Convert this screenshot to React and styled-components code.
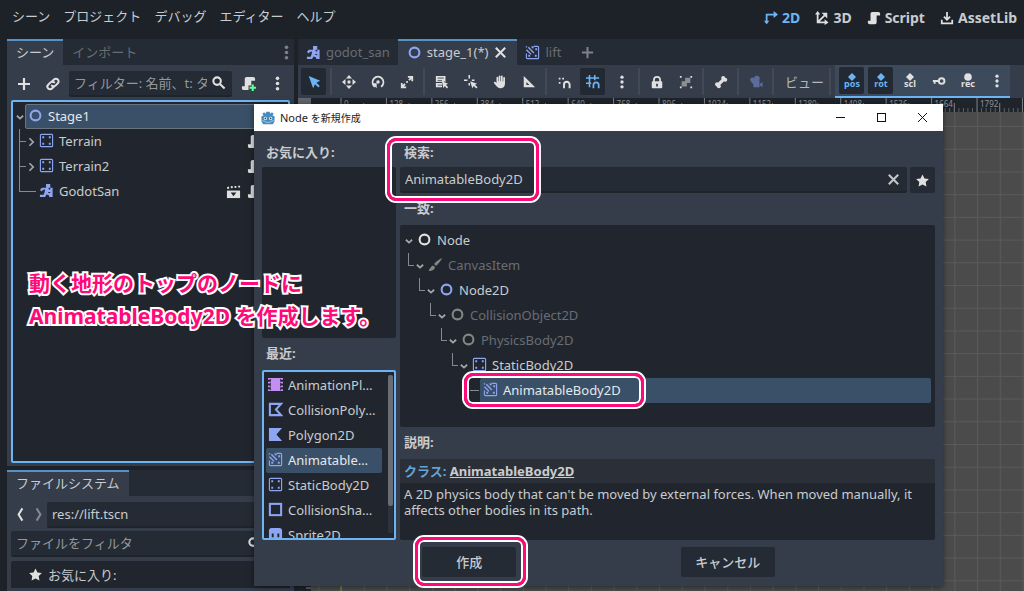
import styled, { createGlobalStyle, css } from 'styled-components';

const colors = {
    page: '#1d2229',
    base: '#363d4a',
    tabBar: '#252b34',
    field: '#252b34',
    tree: '#21262e',
    selected: '#3a5068',
    accent: '#6cb4f4',
    text: '#c9cccf',
    dim: '#686c73',
    icon: '#e0e0e0',
    node2d: '#8da5f3',
    line: '#858a90',
    pink: '#ff0a78',
};

const STEP = 45.43;

const icons = {
    node: <circle cx="8" cy="8" r="5.2" fill="none" stroke="currentColor" strokeWidth="2.2" />,
    plus: <path d="M8 2v12M2 8h12" stroke="currentColor" strokeWidth="2.2" />,
    link: <g fill="none" stroke="currentColor" strokeWidth="2" strokeLinecap="round"><path d="M7 5.5l2-2a2.6 2.6 0 0 1 3.8 3.8L10.5 9.6a2.6 2.6 0 0 1-3.7 0" /><path d="M9 10.5l-2 2a2.6 2.6 0 0 1-3.8-3.8L5.5 6.4a2.6 2.6 0 0 1 3.7 0" /></g>,
    search: <g fill="none" stroke="currentColor" strokeWidth="2.2"><circle cx="6.5" cy="6.5" r="4" /><path d="M9.5 9.5l5 5" /></g>,
    script: <path d="M6 1a2 2 0 0 0-2 2v8H1v2a2 2 0 0 0 2 2h6a2 2 0 0 0 2-2V5h4V3a2 2 0 0 0-2-2z" fill="currentColor" />,
    scriptAdd: <g><path d="M6 1a2 2 0 0 0-2 2v8H1v2a2 2 0 0 0 2 2h5v-5h3V5h4V3a2 2 0 0 0-2-2z" fill="currentColor" /><path d="M12.5 9v7M9 12.5h7" stroke="#5fff97" strokeWidth="2.2" /></g>,
    dots: <g fill="currentColor"><circle cx="8" cy="2.5" r="1.9" /><circle cx="8" cy="8" r="1.9" /><circle cx="8" cy="13.5" r="1.9" /></g>,
    body: <g><rect x="1.5" y="1.5" width="13" height="13" rx="1" fill="none" stroke="currentColor" strokeWidth="1.2" /><path d="M3.500 3.500h2v2h-2zM10.500 3.500h2v2h-2zM3.500 10.500h2v2h-2zM10.500 10.500h2v2h-2z" fill="currentColor" /></g>,
    animBody: <g fill="none" stroke="currentColor" strokeWidth="1.2"><path d="M9 1.500h4.500a1 1 0 0 1 1 1v11a1 1 0 0 1-1 1h-11a1 1 0 0 1-1-1V9" /><path d="M1.500 5l5 5M3.500 2.500l6 6M7 1.500l2 2M1 1.500l1 1" strokeWidth="1.500" /><path d="M11 3.500h2v2h-2zM3.500 10.500h2v2h-2zM10.500 10.500h2v2h-2z" fill="currentColor" stroke="none" /></g>,
    runner: <g fill="currentColor"><path d="M7.500 1h4.500v4H10.500l-.5 1.500 2 .8V5h2.500v4.500H10l-.5 1 2.500.5v-1.500h2.500V15H11l-.5-2-2.500-.8L6.500 15H1v-2.500h4l1-3L6.500 7 4 7.500 3 9 1 7.500 3 5h4.500z" /></g>,
    clapper: <g fill="currentColor"><path d="M1 7h14v8H1z" /><path d="M5 9h6l-3 4z" fill="#21262e" /><path d="M1 3.500l2-.8.6 2-2 .8zM5 2.500l2-.3.3 2-2 .3zM9 2.200l2-.2.200 2-2 .2zM13 1.800h2v2h-2z" /></g>,
    star: <path d="M8 1.500l2.100 4.300 4.700.6-3.400 3.300.8 4.700L8 12.200l-4.200 2.200.8-4.700L1.200 6.400l4.700-.6z" fill="currentColor" />,
    close: <path d="M3 3l10 10M13 3L3 13" stroke="currentColor" strokeWidth="2.2" />,
    brush: <path d="M15 1c-3.500 1.500-6.500 4-8.500 6.500l2 2c2.500-2.300 5.300-5.300 6.500-8.500zM5.500 9c-2 .2-2 2-4.500 4.500v1.500c3 .3 6-1 6.500-4z" fill="currentColor" />,
    film: <path d="M3 1h10v14H3zM0 1h2v2H0zM0 5h2v2H0zM0 9h2v2H0zM0 13h2v2H0zM14 1h2v2h-2zM14 5h2v2h-2zM14 9h2v2h-2zM14 13h2v2h-2zM2 1h12v1H2zM2 5h12v1H2zM2 10h12v1H2zM2 14h12v1H2z" fill="currentColor" />,
    collPoly: <path d="M14 2H2v12h12L8.500 8z" fill="none" stroke="currentColor" strokeWidth="2.2" />,
    polygon: <path d="M15 1H1v14h14L9 8z" fill="currentColor" />,
    shape: <rect x="2" y="2" width="12" height="12" fill="none" stroke="currentColor" strokeWidth="2.2" />,
    sprite: <g><path d="M4 1a3 3 0 0 0-3 3v11h14V4a3 3 0 0 0-3-3z" fill="currentColor" /><path d="M4 7h2v4H4zM10 7h2v4h-2z" fill="#21262e" /></g>,
    select: <path d="M2 1l5 14 2.200-4.500L13 14.300l1.600-1.600-3.800-3.800L15 6.500z" fill="currentColor" />,
    move: <g fill="currentColor"><circle cx="8" cy="8" r="1.900" /><path d="M8 0l3.500 4h-7zM8 16l3.500-4h-7zM0 8l4-3.500v7zM16 8l-4-3.500v7z" /></g>,
    rotate: <g fill="none" stroke="currentColor" strokeWidth="2"><path d="M4.500 13.500A6.300 6.300 0 1 1 11.500 13.500" /><circle cx="8" cy="8" r="2" fill="currentColor" stroke="none" /><path d="M1 9.500h5.500V15z" fill="currentColor" stroke="none" /></g>,
    scale: <g fill="currentColor"><path d="M9 1h6v6h-2V4.500L11 6.500 9.500 5l2-2H9zM7 15H1V9h2v2.500L5 9.500 6.500 11l-2 2H7z" /><circle cx="8" cy="8" r="1.200" /></g>,
    list: <g><path d="M1 1h11v7l-2-1v1H1zM1 9h7v2H3v1h5v2H1z" fill="currentColor" /><path d="M3 3.500h7M3 6.500h5" stroke="#363d4a" /><path d="M8 7l7 3-2.500 1.200L15 14l-1.500 1.300-2.300-2.600L9.500 15z" fill="currentColor" /></g>,
    pivot: <g><path d="M0 6h4M6 0v4M9 6h3M6 9v3" stroke="currentColor" strokeWidth="1.800" /><path d="M7 7l8 3-2.500 1.200L15.500 14 14 15.500l-2.800-3L9.500 15z" fill="currentColor" /></g>,
    hand: <path d="M6.500 1.500a1 1 0 0 1 2 0V7h.6V1.700a1 1 0 0 1 2 0V7.500h.6V3.300a1 1 0 0 1 2 0V10c0 3-2 5-4.500 5C6 15 4.500 13.500 1.200 9.300c-.7-1 .8-2 1.700-1.200L4 9.200V3a1 1 0 0 1 2 0V7h.5z" fill="currentColor" />,
    ruler: <path d="M2 1v13h13zM5 8l3.500 3.500H5z" fill="currentColor" fillRule="evenodd" />,
    snap: <g><path d="M2 3h2v2H2zM6 3h2v2H6zM2 8h2v2H2z" fill="currentColor" /><path d="M8 15v-4a3.200 3.200 0 0 1 6.400 0v4" fill="none" stroke="currentColor" strokeWidth="2.200" /></g>,
    gridSnap: <g fill="none" stroke="currentColor"><path d="M4 0v14M10 0v6M0 3.500h15M0 9.500h6" strokeWidth="1.800" /><path d="M8.500 15v-3.500a3 3 0 0 1 6 0V15" strokeWidth="2" /></g>,
    lock: <g><rect x="2" y="7" width="12" height="8" rx="1" fill="currentColor" /><path d="M4.500 8V5.500a3.500 3.500 0 0 1 7 0V8" fill="none" stroke="currentColor" strokeWidth="2" /><path d="M7 10h2v3H7z" fill="#363d4a" /></g>,
    group: <g fill="currentColor"><path d="M7 3h6v6H7zM3 7h6v6H3z" opacity=".5" /><path d="M1 1h2v2H1zM13 1h2v2h-2zM1 13h2v2H1zM13 13h2v2h-2z" /></g>,
    bone: <g fill="currentColor"><path d="M4 9.500L9.500 4l2.500 2.500L6.500 12z" /><circle cx="10.500" cy="3.500" r="2.300" /><circle cx="12.800" cy="5.500" r="2.300" /><circle cx="3.500" cy="10.500" r="2.300" /><circle cx="5.500" cy="12.800" r="2.300" /></g>,
    camera: <g fill="currentColor"><circle cx="9" cy="4" r="3.200" /><circle cx="4" cy="5.500" r="2.600" /><path d="M3 6h9v8H5v-4L3 9zM12.500 10l3-2v6l-3-2z" /></g>,
    key: <g fill="none" stroke="currentColor" strokeWidth="2.200"><circle cx="11" cy="8" r="3.200" /><path d="M8 8H1M3 8v3" /></g>,
    back: <path d="M10 1.500L6 8l4 6.500" fill="none" stroke="currentColor" strokeWidth="2.200" />,
    forward: <path d="M6 1.500L10 8l-4 6.500" fill="none" stroke="currentColor" strokeWidth="2.200" />,
    down: <path d="M3 6l5 4.500L13 6" fill="none" stroke="currentColor" strokeWidth="2.800" />,
    right: <path d="M5.500 2L11.500 8l-6 6" fill="none" stroke="currentColor" strokeWidth="2.800" />,
    ws2d: <g><path d="M3 14V4h9" fill="none" stroke="currentColor" strokeWidth="2" /><path d="M11 0l5 4-5 4zM0 11h6l-3 4z" fill="currentColor" /></g>,
    ws3d: <g><path d="M3 3v10h9M3 13l8-8" fill="none" stroke="currentColor" strokeWidth="2" /><path d="M0 4l3-4 3 4zM11 9.500l4.500 3.500-4.500 3zM7.500 2H14v6.500z" fill="currentColor" /></g>,
    assetLib: <path d="M8 1v8M4.500 6.500L8 10l3.500-3.500M2 10v4h12v-4" fill="none" stroke="currentColor" strokeWidth="2" />,
    godot: <g><path d="M3 5L1.500 3 3.500 1.500 5.300 3 6 .8h4l.7 2.200 1.800-1.500L14.500 3 13 5l2.500 1v6l-2 3h-11l-2-3V6z" fill="#478cbf" /><circle cx="5" cy="8.500" r="1.800" fill="#fff" /><circle cx="11" cy="8.500" r="1.800" fill="#fff" /><circle cx="5" cy="8.500" r="1" fill="#414042" /><circle cx="11" cy="8.500" r="1" fill="#414042" /><path d="M1 11l4 .8.5 1.200h5l.5-1.200 4-.8" fill="none" stroke="#cfe3f2" strokeWidth=".7" /></g>,
};

function Icon({ name, size = 15, color = colors.icon }) {
    return (
        <IconSvg viewBox="0 0 16 16" width={size} height={size} $color={color} aria-hidden="true">
            {icons[name]}
        </IconSvg>
    );
}

function KeyIcon({ label, round, color = colors.icon }) {
    return (
        <IconSvg viewBox="0 0 16 16" width="16" height="16" $color={color} aria-hidden="true">
            {round ? <circle cx="8" cy="4" r="3.800" fill="currentColor" /> : <path d="M8 0l4 4-4 4-4-4z" fill="currentColor" />}
            <text x="8" y="14" textAnchor="middle" fontSize="9" fontWeight="700" fontFamily="Noto Sans" fill="currentColor">{label}</text>
        </IconSvg>
    );
}

function Tool({ name, active, color, label }) {
    return (
        <ToolButton $active={active} aria-label={label || name}>
            <Icon name={name} size={14} color={active ? colors.accent : color} />
        </ToolButton>
    );
}

const menus = ['シーン', 'プロジェクト', 'デバッグ', 'エディター', 'ヘルプ'];

const workspaces = [
    { name: '2D', icon: 'ws2d', active: true },
    { name: '3D', icon: 'ws3d' },
    { name: 'Script', icon: 'script' },
    { name: 'AssetLib', icon: 'assetLib' },
];

const matches = [
    { name: 'Node', icon: 'node', color: colors.icon },
    { name: 'CanvasItem', icon: 'brush', disabled: true },
    { name: 'Node2D', icon: 'node', color: colors.node2d },
    { name: 'CollisionObject2D', icon: 'node', disabled: true },
    { name: 'PhysicsBody2D', icon: 'node', disabled: true },
    { name: 'StaticBody2D', icon: 'body', color: colors.node2d },
    { name: 'AnimatableBody2D', icon: 'animBody', color: colors.node2d, selected: true },
];

const recent = [
    { name: 'AnimationPlayer', icon: 'film', color: '#c38ef1' },
    { name: 'CollisionPolygon2D', icon: 'collPoly' },
    { name: 'Polygon2D', icon: 'polygon' },
    { name: 'AnimatableBody2D', icon: 'animBody', selected: true },
    { name: 'StaticBody2D', icon: 'body' },
    { name: 'CollisionShape2D', icon: 'shape' },
    { name: 'Sprite2D', icon: 'sprite' },
];

function SceneDock() {
    return (
        <Panel $grow>
            <TabBar>
                <Tab $active>シーン</Tab>
                <Tab>インポート</Tab>
                <TabMenu aria-label="dock menu"><Icon name="dots" color="#7d8188" /></TabMenu>
            </TabBar>
            <DockBody>
                <DockRow>
                    <FlatButton aria-label="add"><Icon name="plus" size={16} /></FlatButton>
                    <FlatButton aria-label="instance"><Icon name="link" size={16} /></FlatButton>
                    <Field>
                        <FieldInput aria-label="filter nodes" placeholder="フィルター: 名前、t: タ" />
                        <Icon name="search" />
                    </Field>
                    <FlatButton aria-label="attach script"><Icon name="scriptAdd" /></FlatButton>
                    <FlatButton aria-label="more"><Icon name="dots" /></FlatButton>
                </DockRow>
                <SceneTree>
                    <SceneRow>
                        <Arrow><Icon name="down" size={10} color="#a3a6aa" /></Arrow>
                        <NodeLabel $selected $outlined><Icon name="node" color={colors.node2d} />Stage1</NodeLabel>
                    </SceneRow>
                    {['Terrain', 'Terrain2'].map((name) => (
                        <SceneRow key={name}>
                            <Branch />
                            <Arrow><Icon name="right" size={10} color="#a3a6aa" /></Arrow>
                            <NodeLabel><Icon name="body" color={colors.node2d} />{name}</NodeLabel>
                            <RowIcons><Icon name="script" /></RowIcons>
                        </SceneRow>
                    ))}
                    <SceneRow>
                        <Branch $last />
                        <NodeLabel><Icon name="runner" color={colors.node2d} />GodotSan</NodeLabel>
                        <RowIcons><Icon name="clapper" /><Icon name="script" /></RowIcons>
                    </SceneRow>
                </SceneTree>
            </DockBody>
        </Panel>
    );
}

function FileSystemDock() {
    return (
        <Panel>
            <TabBar>
                <Tab $active>ファイルシステム</Tab>
            </TabBar>
            <DockBody>
                <DockRow $tight>
                    <NavButton aria-label="back"><Icon name="back" /></NavButton>
                    <NavButton aria-label="forward"><Icon name="forward" color="#858990" /></NavButton>
                    <Field><FieldInput aria-label="path" defaultValue="res://lift.tscn" /></Field>
                </DockRow>
                <FilterRow>
                    <Field>
                        <FieldInput aria-label="filter files" placeholder="ファイルをフィルタ" />
                        <SearchSlot><Icon name="search" /></SearchSlot>
                    </Field>
                </FilterRow>
                <FileTree><Icon name="star" />お気に入り:</FileTree>
            </DockBody>
        </Panel>
    );
}

function Ruler() {
    const count = Math.floor((window.innerWidth - 341) / STEP);
    const marks = Array.from({ length: count + 1 }, (_, i) => i);
    return (
        <RulerSvg aria-hidden="true">
            {marks.map((i) => {
                const x = 43 + i * STEP;
                return (
                    <g key={i}>
                        <path d={`M${x} 0v14`} stroke="#7f8388" />
                        <path d={`M${x + STEP / 2} 5v9`} stroke="#7f8388" />
                        {[1, 2, 3, 4, 6, 7, 8, 9].map((n) => (
                            <path key={n} d={`M${x + (n * STEP) / 10} 10v4`} stroke="#5d6268" />
                        ))}
                        {i < count && <text x={x + 3} y="9" fontSize="8" fill="#8f9398">{i * 128}</text>}
                    </g>
                );
            })}
            <rect width="13" height="14" fill="#62656a" />
        </RulerSvg>
    );
}

function Viewport() {
    return (
        <Canvas>
            <Ruler />
            <CanvasSvg aria-hidden="true">
                <defs>
                    <pattern id="grid" x="43" y="14" width={STEP / 2} height={STEP / 2} patternUnits="userSpaceOnUse">
                        <path d={`M.5 0V${STEP}M0 .5H${STEP}`} stroke="#5a5a5a" fill="none" />
                    </pattern>
                </defs>
                <rect width="100%" height="100%" fill="#4b4b4b" />
                <rect width="100%" height="100%" fill="url(#grid)" />
                <path d="M43 0v2000" stroke="#7f9e35" />
                <rect width="13" height="100%" fill="#1f242b" />
                <path d="M8 476h5" stroke="#8f9398" />
            </CanvasSvg>
        </Canvas>
    );
}

function MainPanel() {
    return (
        <Main>
            <TabBar>
                <SceneTab><Icon name="runner" color={colors.node2d} />godot_san</SceneTab>
                <SceneTab $active><Icon name="node" color={colors.node2d} />stage_1(*)<Icon name="close" /></SceneTab>
                <SceneTab><Icon name="animBody" color={colors.node2d} />lift</SceneTab>
                <AddTab aria-label="new scene"><Icon name="plus" color="#7d8188" /></AddTab>
            </TabBar>
            <Toolbar>
                <Tool name="select" active />
                <Divider />
                <Tool name="move" />
                <Tool name="rotate" />
                <Tool name="scale" />
                <Divider />
                <Tool name="list" />
                <Tool name="pivot" />
                <Tool name="hand" />
                <Tool name="ruler" />
                <Divider />
                <Tool name="snap" />
                <Tool name="gridSnap" active />
                <Tool name="dots" />
                <Divider />
                <Tool name="lock" />
                <Tool name="group" />
                <Divider />
                <Tool name="bone" />
                <Divider />
                <Tool name="camera" color="#5c6c9c" />
                <Divider />
                <ViewButton>ビュー</ViewButton>
                <Divider />
                <KeyTools>
                    <ToolButton $active aria-label="key position"><KeyIcon label="pos" color={colors.accent} /></ToolButton>
                    <ToolButton $active aria-label="key rotation"><KeyIcon label="rot" color={colors.accent} /></ToolButton>
                    <ToolButton aria-label="key scale"><KeyIcon label="scl" /></ToolButton>
                    <Tool name="key" />
                    <ToolButton aria-label="auto key"><KeyIcon label="rec" round /></ToolButton>
                    <Tool name="dots" />
                </KeyTools>
            </Toolbar>
            <Viewport />
        </Main>
    );
}

function CreateDialog() {
    return (
        <Dialog role="dialog" aria-labelledby="dialog-title">
            <TitleBar>
                <Icon name="godot" size={14} />
                <DialogTitle id="dialog-title">Node <TitleKana>を新規作成</TitleKana></DialogTitle>
                <WindowButton aria-label="minimize"><svg width="11" height="11"><path d="M1 5.500h9" stroke="#111" /></svg></WindowButton>
                <WindowButton aria-label="maximize"><svg width="11" height="11"><rect x="1.500" y="1.500" width="8" height="8" fill="none" stroke="#111" /></svg></WindowButton>
                <WindowButton aria-label="close"><svg width="11" height="11"><path d="M1 1l9 9M10 1l-9 9" stroke="#111" /></svg></WindowButton>
            </TitleBar>
            <DialogBody>
                <Columns>
                    <LeftColumn>
                        <Label>お気に入り:</Label>
                        <Favorites />
                        <Label $tall>最近:</Label>
                        <RecentBox>
                            <RecentList>
                                {recent.map((item) => (
                                    <RecentItem key={item.name} $selected={item.selected}>
                                        <Icon name={item.icon} color={item.color || colors.node2d} />
                                        <RecentName>{item.name}</RecentName>
                                    </RecentItem>
                                ))}
                            </RecentList>
                            <ScrollTrack><ScrollThumb /></ScrollTrack>
                        </RecentBox>
                    </LeftColumn>
                    <RightColumn>
                        <Label as="label" htmlFor="search">検索:</Label>
                        <SearchRow>
                            <Field>
                                <FieldInput id="search" defaultValue="AnimatableBody2D" />
                                <ClearButton aria-label="clear"><Icon name="close" color="#c3c6ca" /></ClearButton>
                            </Field>
                            <StarButton aria-label="favorite"><Icon name="star" /></StarButton>
                        </SearchRow>
                        <Label $tall>一致:</Label>
                        <MatchTree>
                            {matches.map((item, level) => (
                                <MatchRow key={item.name} $level={level}>
                                    {level > 0 && <Elbow />}
                                    <MatchArrow>
                                        {item.selected ? <Dash /> : <Icon name="down" size={10} color="#a3a6aa" />}
                                    </MatchArrow>
                                    <NodeLabel $selected={item.selected} $disabled={item.disabled}>
                                        <Icon name={item.icon} color={item.disabled ? '#84867f' : item.color} />
                                        {item.name}
                                    </NodeLabel>
                                </MatchRow>
                            ))}
                        </MatchTree>
                        <Label $tall>説明:</Label>
                        <Help>
                            <HelpTitle>クラス: <HelpLink href="#AnimatableBody2D">AnimatableBody2D</HelpLink></HelpTitle>
                            <HelpText>A 2D physics body that can't be moved by external forces. When moved manually, it affects other bodies in its path.</HelpText>
                        </Help>
                    </RightColumn>
                </Columns>
                <Actions>
                    <ActionButton>作成</ActionButton>
                    <ActionButton>キャンセル</ActionButton>
                </Actions>
            </DialogBody>
        </Dialog>
    );
}

export default function App() {
    return (
        <Editor>
            <GlobalStyle />
            <MenuBar>
                {menus.map((menu) => <MenuButton key={menu}>{menu}</MenuButton>)}
                <Workspaces>
                    {workspaces.map(({ name, icon, active }) => (
                        <WorkspaceButton key={name} $active={active}>
                            <Icon name={icon} size={14} color={active ? colors.accent : colors.icon} />
                            {name}
                        </WorkspaceButton>
                    ))}
                </Workspaces>
            </MenuBar>
            <Workspace>
                <Docks>
                    <SceneDock />
                    <FileSystemDock />
                </Docks>
                <MainPanel />
            </Workspace>
            <CreateDialog />
            <Highlight $x={385} $y={136} $w={156} $h={67} />
            <Highlight $x={462} $y={371} $w={184} $h={38} />
            <Highlight $x={413} $y={535} $w={115} $h={53} />
            <Caption>動く地形のトップのノードに<br />AnimatableBody2D を作成します。</Caption>
        </Editor>
    );
}

const GlobalStyle = createGlobalStyle`
    * {
        box-sizing: border-box;
    }

    body {
        margin: 0;
        background: ${colors.page};
        color: ${colors.text};
        font: 13px/18px 'Noto Sans', 'Noto Sans CJK JP', sans-serif;
    }

    button, input {
        padding: 0;
        border: 0;
        background: none;
        color: inherit;
        font: inherit;
    }
`;

const Editor = styled.div`
    position: relative;
    display: flex;
    flex-direction: column;
    height: 100vh;
    overflow: hidden;
    white-space: nowrap;
`;

const IconSvg = styled.svg`
    display: block;
    flex: none;
    color: ${({ $color }) => $color};
`;

const MenuBar = styled.header`
    display: flex;
    align-items: center;
    gap: 13px;
    height: 39px;
    padding: 0 7px 8px 12px;
`;

const MenuButton = styled.button`
    height: 24px;
`;

const Workspaces = styled.nav`
    display: flex;
    gap: 15px;
    margin-left: auto;
    padding-top: 4px;
`;

const WorkspaceButton = styled.button`
    display: flex;
    align-items: center;
    gap: 4px;
    color: ${({ $active }) => ($active ? colors.accent : colors.text)};
    font-size: 14px;
    font-weight: 700;
`;

const Workspace = styled.div`
    display: flex;
    flex: 1;
    gap: 4px;
    min-height: 0;
    padding-left: 7px;
`;

const Docks = styled.aside`
    display: flex;
    flex-direction: column;
    gap: 4px;
    width: 287px;
`;

const Panel = styled.section`
    display: flex;
    flex: ${({ $grow }) => ($grow ? '1' : '0 0 121px')};
    flex-direction: column;
    min-height: 0;
    background: ${colors.base};
`;

const TabBar = styled.div`
    display: flex;
    flex: none;
    height: 26px;
    background: ${colors.tabBar};
`;

const Tab = styled.button`
    padding: 0 9px 2px;
    border-top: 2px solid transparent;
    color: ${colors.dim};

    ${({ $active }) => $active && css`
        border-color: #5592c7;
        background: ${colors.base};
        color: ${colors.text};
    `}
`;

const TabMenu = styled.button`
    margin-left: auto;
`;

const DockBody = styled.div`
    display: flex;
    flex: 1;
    flex-direction: column;
    min-height: 0;
    padding: 6px 4px 3px;
`;

const DockRow = styled.div`
    display: flex;
    align-items: center;
    gap: ${({ $tight }) => ($tight ? '0' : '4px')};
    height: 25px;
    margin-bottom: 4px;
`;

const FlatButton = styled.button`
    display: grid;
    place-items: center;
    width: 25px;
    height: 25px;
`;

const NavButton = styled(FlatButton)`
    width: 18px;
`;

const Field = styled.div`
    display: flex;
    flex: 1;
    align-items: center;
    gap: 4px;
    min-width: 0;
    height: 26px;
    padding: 0 6px 0 5px;
    border-bottom: 2px solid #1f242b;
    border-radius: 2px;
    background: ${colors.field};
`;

const FieldInput = styled.input`
    flex: 1;
    min-width: 0;
    height: 24px;
    outline: none;

    &::placeholder {
        color: #94989d;
        opacity: 1;
    }
`;

const FilterRow = styled.div`
    display: flex;
    margin-bottom: 4px;
`;

const SearchSlot = styled.span`
    margin-right: 22px;
`;

const SceneTree = styled.div`
    flex: 1;
    padding: 2px 0;
    border: 2px solid ${colors.accent};
    border-radius: 2px;
    background: ${colors.tree};
`;

const SceneRow = styled.div`
    display: flex;
    align-items: center;
    height: 25px;
    padding-left: 2px;
`;

const Arrow = styled.span`
    display: grid;
    place-items: center;
    width: 10px;
    height: 25px;
`;

const Branch = styled.span`
    width: ${({ $last }) => ($last ? '17px' : '7px')};
    height: 25px;
    margin-left: 4px;
    background:
        linear-gradient(${colors.line}, ${colors.line}) 0 0 / 1px ${({ $last }) => ($last ? '50%' : '100%')} no-repeat,
        linear-gradient(${colors.line}, ${colors.line}) 0 50% / 100% 1px no-repeat;
`;

const NodeLabel = styled.span`
    display: flex;
    flex: 1;
    align-items: center;
    gap: 5px;
    height: 25px;
    padding: 0 0 2px 3px;
    border-radius: 2px;
    color: ${({ $disabled }) => ($disabled ? colors.dim : colors.text)};

    ${({ $selected }) => $selected && css`
        background: ${colors.selected};
        color: #e4e8eb;
    `}

    ${({ $outlined }) => $outlined && css`
        padding-left: 2px;
        border: 1px solid #69747f;
    `}
`;

const RowIcons = styled.span`
    display: flex;
    gap: 6px;
    padding-right: 26px;
`;

const FileTree = styled.div`
    display: flex;
    flex: 1;
    align-items: center;
    gap: 5px;
    padding: 0 17px;
    border-radius: 2px 2px 0 0;
    background: ${colors.tree};
`;

const Main = styled.main`
    display: flex;
    flex: 1;
    flex-direction: column;
    min-width: 0;
    background: ${colors.base};
`;

const SceneTab = styled(Tab)`
    display: flex;
    align-items: center;
    gap: 5px;
    padding: 0 ${({ $active }) => ($active ? '9px' : '8px')} 2px;
`;

const AddTab = styled.button`
    padding: 0 11px;
`;

const Toolbar = styled.div`
    display: flex;
    align-items: center;
    gap: 4px;
    height: 33px;
    padding-left: 3px;
`;

const ToolButton = styled.button`
    display: grid;
    flex: none;
    place-items: center;
    width: 25px;
    height: 27px;
    border-radius: 2px;
    background: ${({ $active }) => ($active ? '#222932' : 'transparent')};
`;

const Divider = styled.span`
    width: 2px;
    height: 27px;
    background: #434a56;
`;

const ViewButton = styled.button`
    width: 47px;
    padding-left: 6px;
    color: #b3b6bb;
`;

const KeyTools = styled.div`
    display: flex;
    align-items: center;
    gap: 4px;
    height: 33px;
    padding: 0 1px 0 4px;
    border-bottom: 2px solid ${colors.accent};
    background: #3c4a5b;
`;

const Canvas = styled.div`
    display: flex;
    flex: 1;
    flex-direction: column;
    min-height: 0;
`;

const RulerSvg = styled.svg`
    display: block;
    width: 100%;
    height: 14px;
    background: #1f242b;
`;

const CanvasSvg = styled.svg`
    display: block;
    flex: 1;
    width: 100%;
    min-height: 0;
`;

const Dialog = styled.div`
    position: absolute;
    top: 104px;
    right: 81px;
    left: 254px;
    background: ${colors.base};
    box-shadow: 0 1px 6px rgba(0, 0, 0, 0.5);
`;

const TitleBar = styled.div`
    display: flex;
    align-items: center;
    height: 27px;
    padding-left: 7px;
    background: #fff;
`;

const DialogTitle = styled.span`
    flex: 1;
    margin-left: 5px;
    color: #222;
    font-size: 11px;
`;

const TitleKana = styled.span`
    font-size: 10px;
`;

const WindowButton = styled.button`
    display: grid;
    place-items: center;
    width: 41px;
    height: 27px;
`;

const DialogBody = styled.div`
    padding: 6px 8px 9px;
`;

const Columns = styled.div`
    display: flex;
    gap: 4px;
`;

const LeftColumn = styled.div`
    display: flex;
    flex-direction: column;
    width: 134px;
`;

const RightColumn = styled.div`
    flex: 1;
    min-width: 0;
`;

const Label = styled.div`
    display: block;
    height: ${({ $tall }) => ($tall ? '32px' : '30px')};
    padding-left: 4px;
    font-weight: 700;
    line-height: 30px;
`;

const Favorites = styled.div`
    height: 171px;
    border-radius: 2px;
    background: ${colors.tree};
`;

const RecentBox = styled.div`
    display: flex;
    gap: 6px;
    height: 170px;
    padding: 1px 1px 0 2px;
    border: 2px solid ${colors.accent};
    border-radius: 2px;
    background: ${colors.tree};
    overflow: hidden;
`;

const RecentList = styled.ul`
    flex: 1;
    min-width: 0;
    margin: 0;
    padding: 0;
    list-style: none;
`;

const RecentItem = styled.li`
    display: flex;
    align-items: center;
    gap: 5px;
    height: 25px;
    padding: 0 6px 2px 2px;
    border-radius: 2px;

    ${({ $selected }) => $selected && css`
        background: ${colors.selected};
        color: #e4e8eb;
    `}
`;

const RecentName = styled.span`
    overflow: hidden;
    text-overflow: ellipsis;
`;

const ScrollTrack = styled.div`
    width: 5px;
    height: 158px;
    margin-top: 2px;
    background: #2d333c;
`;

const ScrollThumb = styled.div`
    height: 131px;
    border-radius: 3px;
    background: #6a6e74;
`;

const SearchRow = styled.div`
    display: flex;
    gap: 3px;
`;

const ClearButton = styled.button`
    display: grid;
    place-items: center;
`;

const StarButton = styled(FlatButton)`
    height: 26px;
    border-radius: 2px;
    background: ${colors.field};
`;

const MatchTree = styled.div`
    height: 202px;
    padding: 3px 4px;
    border-radius: 2px;
    background: ${colors.tree};
`;

const MatchRow = styled.div`
    display: flex;
    height: 25px;
    padding-left: ${({ $level }) => $level * 11}px;
`;

const Elbow = styled.span`
    width: 6px;
    height: 13px;
    margin: 0 1px 0 -7px;
    border: solid ${colors.line};
    border-width: 0 0 1px 1px;
`;

const MatchArrow = styled(Arrow)`
    width: 9px;
    margin-right: 1px;
`;

const Dash = styled.span`
    width: 9px;
    height: 1px;
    background: ${colors.line};
`;

const Help = styled.div`
    height: 81px;
    border-radius: 2px;
    background: ${colors.tree};
    white-space: normal;
`;

const HelpTitle = styled.div`
    height: 24px;
    padding-left: 4px;
    background: #2a2f38;
    color: #62a3dc;
    font-weight: 700;
    line-height: 24px;
`;

const HelpLink = styled.a`
    color: ${colors.text};
`;

const HelpText = styled.p`
    margin: 0;
    padding: 3px 20px 0 4px;
    line-height: 16px;
`;

const Actions = styled.div`
    display: flex;
    gap: 4px;
    justify-content: space-evenly;
    margin-top: 7px;
`;

const ActionButton = styled.button`
    width: 94px;
    height: 30px;
    padding-bottom: 1px;
    border-radius: 2px;
    background: ${colors.field};
    font-weight: 500;
`;

const Highlight = styled.div`
    position: absolute;
    top: ${({ $y }) => $y + 2}px;
    left: ${({ $x }) => $x + 2}px;
    width: ${({ $w }) => $w - 4}px;
    height: ${({ $h }) => $h - 4}px;
    border: 3px solid ${colors.pink};
    border-radius: 9px;
    box-shadow: 0 0 0 2px #fff, inset 0 0 0 2px #fff;
    pointer-events: none;
`;

const Caption = styled.p`
    position: absolute;
    top: 267px;
    left: 29px;
    margin: 0;
    color: ${colors.pink};
    font-size: 21px;
    font-weight: 700;
    line-height: 33px;
    paint-order: stroke fill;
    -webkit-text-stroke: 4px #fff;
`;
